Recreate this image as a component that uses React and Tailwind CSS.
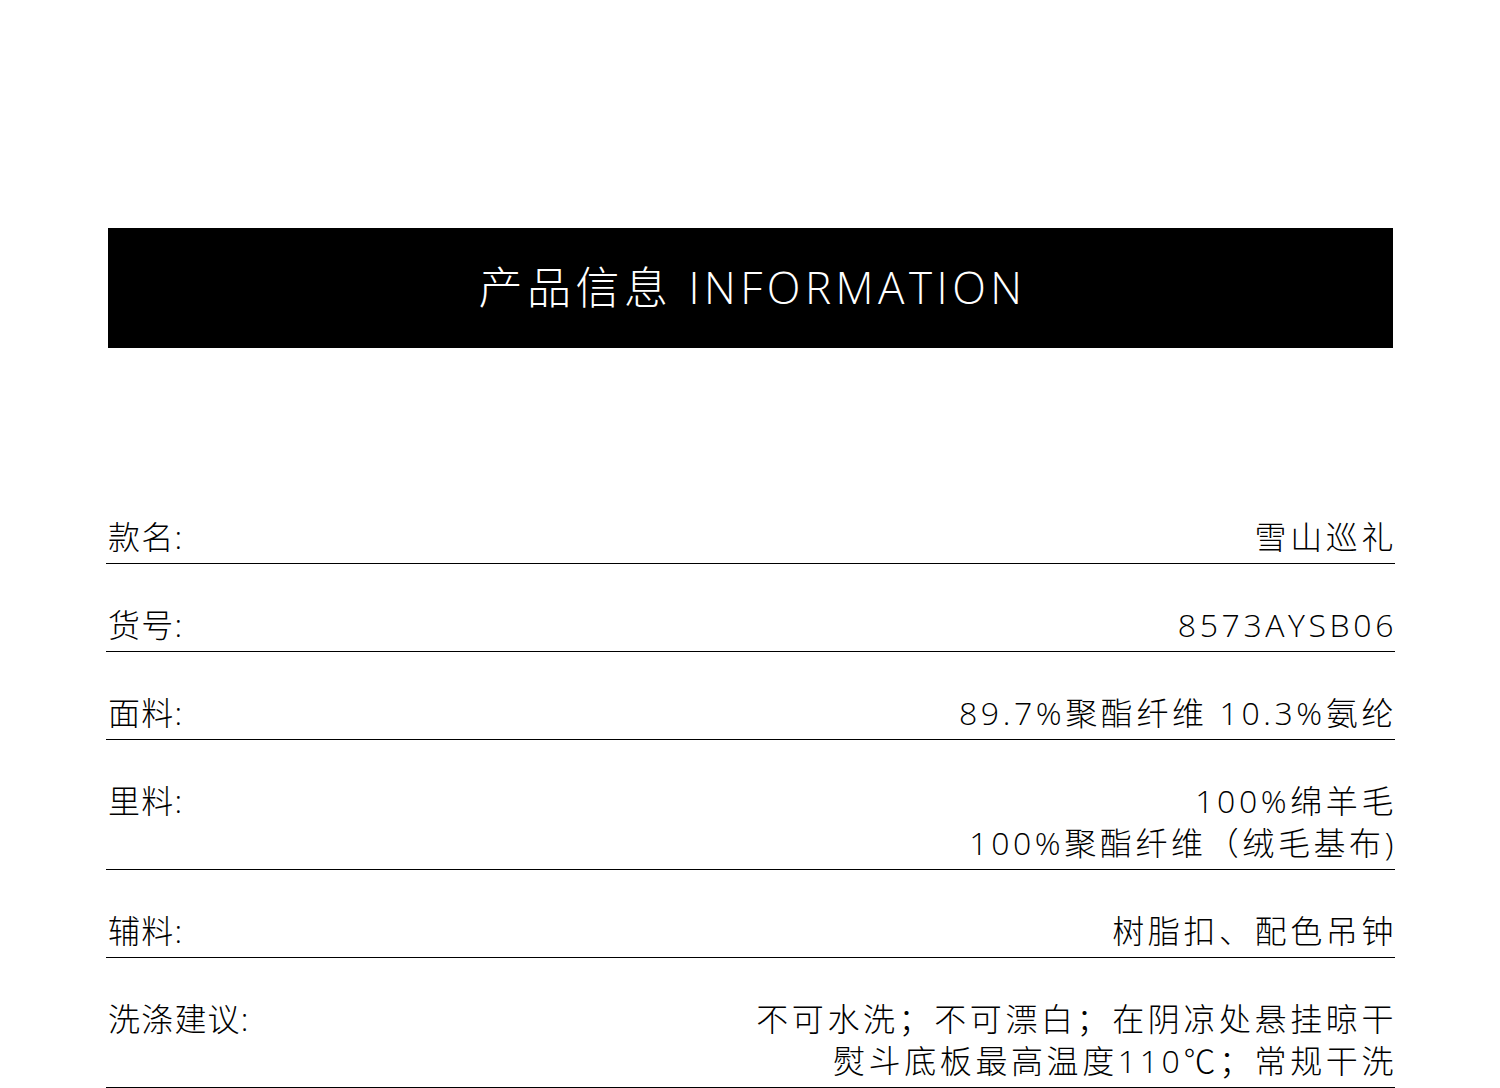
import React from 'react';

const rows = [
  { label: '款名:', value: ['雪山巡礼'] },
  { label: '货号:', value: ['8573AYSB06'] },
  { label: '面料:', value: ['89.7%聚酯纤维 10.3%氨纶'] },
  { label: '里料:', value: ['100%绵羊毛', '100%聚酯纤维（绒毛基布)'] },
  { label: '辅料:', value: ['树脂扣、配色吊钟'] },
  { label: '洗涤建议:', value: ['不可水洗；不可漂白；在阴凉处悬挂晾干', '熨斗底板最高温度110℃；常规干洗'] },
];

export default function App() {
  return (
    <div className="min-h-[1088px] bg-white text-black font-['Open_Sans','Noto_Sans_CJK_SC',sans-serif] font-light pt-[228px]">
      <div className="ml-[108px] w-[1285px] h-[120px] bg-black flex items-center justify-center">
        <h1 className="text-white text-[44px] leading-none tracking-[4.5px] pl-[4px] -mt-[2px]">产品信息 INFORMATION</h1>
      </div>

      <div className="ml-[106px] w-[1289px] mt-[128px]">
        {rows.map((row) => (
          <div key={row.label} className="flex justify-between pt-10 pb-[5px] border-b border-black">
            <span className="text-[32px] leading-[42px] pl-[2px] tracking-[1.2px]">{row.label}</span>
            <div className="text-right text-[32px] leading-[42px] tracking-[3.6px] -mr-[2px]">
              {row.value.map((line) => (
                <div key={line}>{line}</div>
              ))}
            </div>
          </div>
        ))}
      </div>
    </div>
  );
}
